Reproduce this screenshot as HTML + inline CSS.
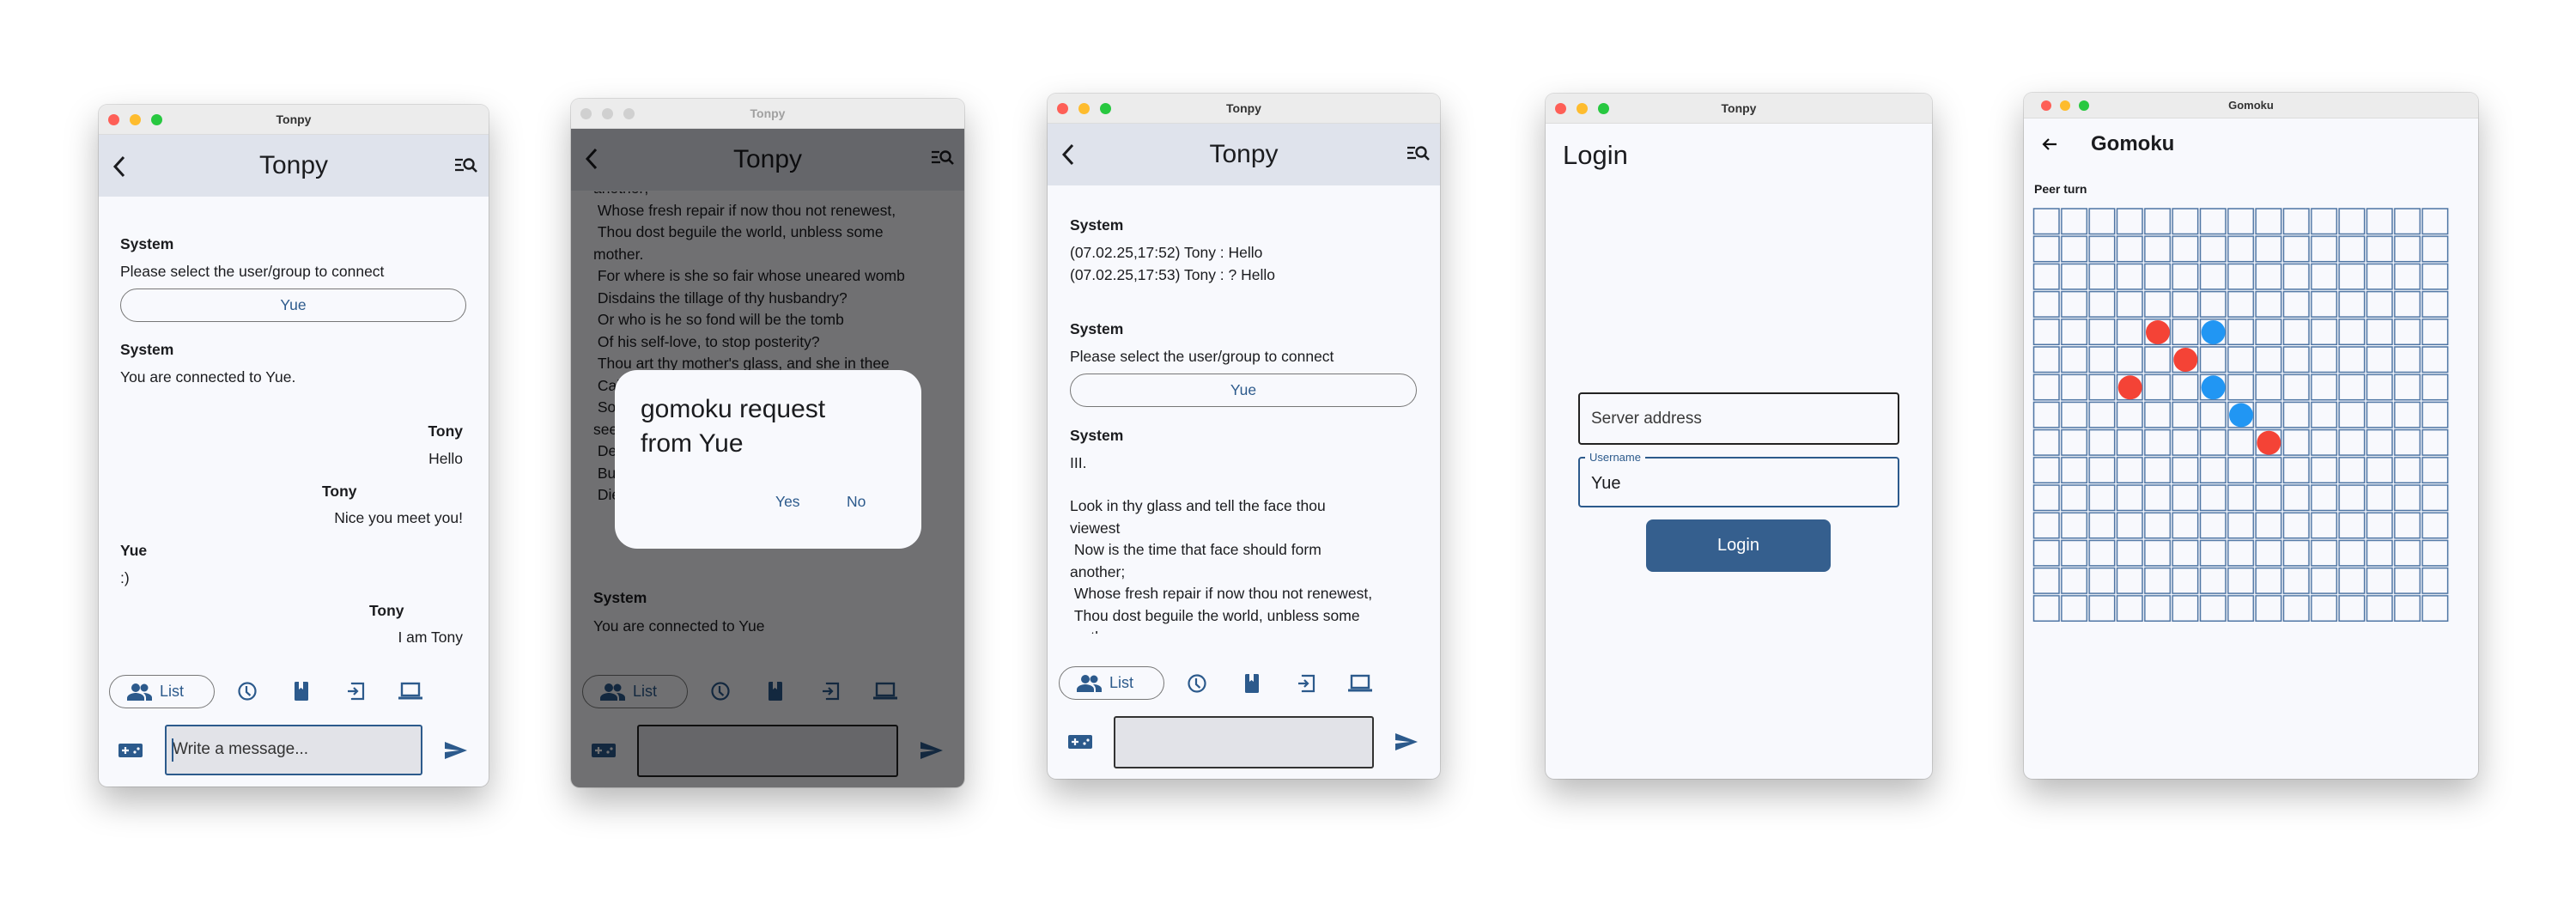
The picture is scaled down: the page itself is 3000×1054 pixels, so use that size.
<!DOCTYPE html>
<html><head><meta charset="utf-8">
<style>
*{margin:0;padding:0;box-sizing:border-box}
body{width:3000px;height:1054px;background:#fff;position:relative;overflow:hidden;font-family:"Liberation Sans",sans-serif;color:#1b1c1f}
.win{position:absolute;background:#f8f9fd;border-radius:10px;overflow:hidden;box-shadow:0 18px 40px rgba(0,0,0,.28),0 0 0 1px rgba(0,0,0,.12)}
.tb{position:absolute;left:0;top:0;right:0;height:35px;background:#ececec;border-bottom:1px solid #dcdcdc;text-align:center;font-weight:bold;font-size:14px;line-height:35px;color:#333}
.dot{position:absolute;width:13px;height:13px;border-radius:50%;top:11px}
.hd{position:absolute;left:0;right:0;top:35px;height:72px;background:#dfe3ec}
.hd .t{position:absolute;left:0;right:0;text-align:center;top:19px;font-size:30px;line-height:34px}
.a{position:absolute;font-size:17.5px;line-height:24px;white-space:nowrap}
.b{font-weight:bold}
.btn{position:absolute;border:1.5px solid #777;border-radius:20px;text-align:center;color:#2c5a8c;font-size:17.5px;line-height:36px}
.chip{position:absolute;border:1.5px solid #777;border-radius:20px;height:39px;width:123px;color:#2c5a8c;font-size:18px;line-height:36px}
.ic{position:absolute}
.inp{position:absolute;background:#e2e3e8;border-radius:3px}
</style></head><body>

<!-- Window 1 -->
<div class="win" style="left:115px;top:122px;width:454px;height:794px">
 <div class="tb">Tonpy<div class="dot" style="left:11px;background:#fe5f57"></div><div class="dot" style="left:36px;background:#febc2e"></div><div class="dot" style="left:61px;background:#28c840"></div></div>
 <div class="hd"><div class="t">Tonpy</div>
  <svg class="ic" style="left:12px;top:22px" width="26" height="30" viewBox="0 0 26 30"><path d="M17 4 L7 15 L17 26" fill="none" stroke="#1b1c1f" stroke-width="3"/></svg>
  <svg class="ic" style="left:413px;top:24px" width="28" height="24" viewBox="0 0 28 24"><path d="M2 5h9M2 11h7M2 17h10" stroke="#1b1c1f" stroke-width="2.2"/><circle cx="18" cy="10" r="5.5" fill="none" stroke="#1b1c1f" stroke-width="2.4"/><path d="M22 14l5 5" stroke="#1b1c1f" stroke-width="2.6"/></svg>
 </div>
 <div class="a b" style="left:25px;top:150px">System</div>
 <div class="a" style="left:25px;top:182px">Please select the user/group to connect</div>
 <div class="btn" style="left:25px;top:214px;width:403px;height:39px">Yue</div>
 <div class="a b" style="left:25px;top:273px">System</div>
 <div class="a" style="left:25px;top:305px">You are connected to Yue.</div>
 <div class="a b" style="right:30px;top:368px">Tony</div>
 <div class="a" style="right:30px;top:400px">Hello</div>
 <div class="a b" style="left:260px;top:438px">Tony</div>
 <div class="a" style="right:30px;top:469px">Nice you meet you!</div>
 <div class="a b" style="left:25px;top:507px">Yue</div>
 <div class="a" style="left:25px;top:539px">:)</div>
 <div class="a b" style="left:315px;top:577px">Tony</div>
 <div class="a" style="right:30px;top:608px">I am Tony</div>
 <div class="chip" style="left:12px;top:664px"><svg class="ic" style="left:20px;top:8px" width="30" height="22" viewBox="0 0 30 22"><circle cx="10" cy="6" r="5" fill="#2c5a8c"/><circle cx="20" cy="6" r="4.5" fill="#2c5a8c"/><path d="M0 21v-3c0-4 6-6 10-6s10 2 10 6v3z" fill="#2c5a8c"/><path d="M19 12c4 0 10 1.5 10 5.5v3.5h-7v-3c0-2.5-1-4.5-3-6z" fill="#2c5a8c"/></svg><span style="position:absolute;left:58px">List</span></div>
 <svg class="ic" style="left:161px;top:671px" width="24" height="24" viewBox="0 0 24 24"><circle cx="12" cy="12" r="9.5" fill="none" stroke="#2c5a8c" stroke-width="2.2"/><path d="M11 6v7l4.5 4" fill="none" stroke="#2c5a8c" stroke-width="2.2"/></svg>
 <svg class="ic" style="left:226px;top:671px" width="20" height="24" viewBox="0 0 20 24"><rect x="2" y="1" width="16" height="22" rx="1.5" fill="#2c5a8c"/><path d="M7 1v9l2.5-2 2.5 2V1" fill="#f8f9fd"/></svg>
 <svg class="ic" style="left:287px;top:671px" width="24" height="24" viewBox="0 0 24 24"><path d="M8 4V3h13v18H8v-1" fill="none" stroke="#2c5a8c" stroke-width="2.2"/><path d="M3 12h11M10 8l4 4-4 4" fill="none" stroke="#2c5a8c" stroke-width="2.2"/></svg>
 <svg class="ic" style="left:348px;top:671px" width="30" height="24" viewBox="0 0 30 24"><rect x="5" y="3" width="20" height="14" fill="none" stroke="#2c5a8c" stroke-width="2.4"/><path d="M1 20h28" stroke="#2c5a8c" stroke-width="3"/></svg>
 <svg class="ic" style="left:22px;top:741px" width="30" height="22" viewBox="0 0 30 22"><rect x="1" y="3" width="28" height="16" rx="2" fill="#2c5a8c"/><path d="M5 11h8M9 7v8" stroke="#f8f9fd" stroke-width="2.2"/><circle cx="20" cy="13" r="1.6" fill="#f8f9fd"/><circle cx="24" cy="9" r="1.6" fill="#f8f9fd"/></svg>
 <div class="inp" style="left:77px;top:722px;width:300px;height:59px;border:2px solid #2c5a8c"><div class="a" style="left:7px;top:15px;font-size:19px;color:#333">Write a message...</div><div style="position:absolute;left:6px;top:14px;width:2px;height:27px;background:#2c5a8c"></div></div>
 <svg class="ic" style="left:402px;top:740px" width="28" height="24" viewBox="0 0 28 24"><path d="M1 22L27 12 1 2v8l17 2-17 2z" fill="#2c5a8c"/></svg>
</div>

<!-- Window 2 -->
<div class="win" style="left:665px;top:115px;width:458px;height:802px">
 <div style="position:absolute;left:0;top:35px;right:0;bottom:0">
  <div class="hd" style="top:0"><div class="t">Tonpy</div>
   <svg class="ic" style="left:12px;top:20px" width="26" height="30" viewBox="0 0 26 30"><path d="M17 4 L7 15 L17 26" fill="none" stroke="#1b1c1f" stroke-width="3"/></svg>
   <svg class="ic" style="left:418px;top:22px" width="28" height="24" viewBox="0 0 28 24"><path d="M2 5h9M2 11h7M2 17h10" stroke="#1b1c1f" stroke-width="2.2"/><circle cx="18" cy="10" r="5.5" fill="none" stroke="#1b1c1f" stroke-width="2.4"/><path d="M22 14l5 5" stroke="#1b1c1f" stroke-width="2.6"/></svg>
  </div>
  <div style="position:absolute;left:0;right:0;top:73px;height:380px;overflow:hidden">
   <div class="a" style="left:26px;top:-16px">another;</div>
   <div class="a" style="left:26px;top:10px">&nbsp;Whose fresh repair if now thou not renewest,</div>
   <div class="a" style="left:26px;top:35px">&nbsp;Thou dost beguile the world, unbless some</div>
   <div class="a" style="left:26px;top:61px">mother.</div>
   <div class="a" style="left:26px;top:86px">&nbsp;For where is she so fair whose uneared womb</div>
   <div class="a" style="left:26px;top:112px">&nbsp;Disdains the tillage of thy husbandry?</div>
   <div class="a" style="left:26px;top:137px">&nbsp;Or who is he so fond will be the tomb</div>
   <div class="a" style="left:26px;top:163px">&nbsp;Of his self-love, to stop posterity?</div>
   <div class="a" style="left:26px;top:188px">&nbsp;Thou art thy mother's glass, and she in thee</div>
   <div class="a" style="left:26px;top:214px">&nbsp;Calls back the lovely April of her prime;</div>
   <div class="a" style="left:26px;top:239px">&nbsp;So thou through windows of thine age shalt</div>
   <div class="a" style="left:26px;top:265px">see</div>
   <div class="a" style="left:26px;top:290px">&nbsp;Despite of wrinkles this thy golden time.</div>
   <div class="a" style="left:26px;top:316px">&nbsp;But if thou live remember'd not to be,</div>
   <div class="a" style="left:26px;top:341px">&nbsp;Die single, and thine image dies with thee.</div>
  </div>
  <div class="a b" style="left:26px;top:534px">System</div>
  <div class="a" style="left:26px;top:567px">You are connected to Yue</div>
  <div class="chip" style="left:13px;top:636px"><svg class="ic" style="left:20px;top:8px" width="30" height="22" viewBox="0 0 30 22"><circle cx="10" cy="6" r="5" fill="#2c5a8c"/><circle cx="20" cy="6" r="4.5" fill="#2c5a8c"/><path d="M0 21v-3c0-4 6-6 10-6s10 2 10 6v3z" fill="#2c5a8c"/><path d="M19 12c4 0 10 1.5 10 5.5v3.5h-7v-3c0-2.5-1-4.5-3-6z" fill="#2c5a8c"/></svg><span style="position:absolute;left:58px">List</span></div>
  <svg class="ic" style="left:162px;top:643px" width="24" height="24" viewBox="0 0 24 24"><circle cx="12" cy="12" r="9.5" fill="none" stroke="#2c5a8c" stroke-width="2.2"/><path d="M11 6v7l4.5 4" fill="none" stroke="#2c5a8c" stroke-width="2.2"/></svg>
  <svg class="ic" style="left:228px;top:643px" width="20" height="24" viewBox="0 0 20 24"><rect x="2" y="1" width="16" height="22" rx="1.5" fill="#2c5a8c"/><path d="M7 1v9l2.5-2 2.5 2V1" fill="#f8f9fd"/></svg>
  <svg class="ic" style="left:290px;top:643px" width="24" height="24" viewBox="0 0 24 24"><path d="M8 4V3h13v18H8v-1" fill="none" stroke="#2c5a8c" stroke-width="2.2"/><path d="M3 12h11M10 8l4 4-4 4" fill="none" stroke="#2c5a8c" stroke-width="2.2"/></svg>
  <svg class="ic" style="left:351px;top:643px" width="30" height="24" viewBox="0 0 30 24"><rect x="5" y="3" width="20" height="14" fill="none" stroke="#2c5a8c" stroke-width="2.4"/><path d="M1 20h28" stroke="#2c5a8c" stroke-width="3"/></svg>
  <svg class="ic" style="left:23px;top:713px" width="30" height="22" viewBox="0 0 30 22"><rect x="1" y="3" width="28" height="16" rx="2" fill="#2c5a8c"/><path d="M5 11h8M9 7v8" stroke="#f8f9fd" stroke-width="2.2"/><circle cx="20" cy="13" r="1.6" fill="#f8f9fd"/><circle cx="24" cy="9" r="1.6" fill="#f8f9fd"/></svg>
  <div class="inp" style="left:77px;top:694px;width:304px;height:61px;border:2px solid #222"></div>
  <svg class="ic" style="left:406px;top:712px" width="28" height="24" viewBox="0 0 28 24"><path d="M1 22L27 12 1 2v8l17 2-17 2z" fill="#2c5a8c"/></svg>
  <div style="position:absolute;left:0;top:0;right:0;bottom:0;background:rgba(0,0,0,.55)"></div>
  <div style="position:absolute;left:51px;top:281px;width:357px;height:208px;background:#f8f9fd;border-radius:26px">
   <div style="position:absolute;left:30px;top:26px;font-size:30px;line-height:40px">gomoku request<br>from Yue</div>
   <div class="a" style="left:187px;top:141px;color:#2c5a8c">Yes</div>
   <div class="a" style="left:270px;top:141px;color:#2c5a8c">No</div>
  </div>
 </div>
 <div class="tb" style="color:#a0a0a0">Tonpy<div class="dot" style="left:11px;background:#d0d0d0"></div><div class="dot" style="left:36px;background:#d0d0d0"></div><div class="dot" style="left:61px;background:#d0d0d0"></div></div>
</div>

<!-- Window 3 -->
<div class="win" style="left:1220px;top:109px;width:457px;height:798px">
 <div class="tb">Tonpy<div class="dot" style="left:11px;background:#fe5f57"></div><div class="dot" style="left:36px;background:#febc2e"></div><div class="dot" style="left:61px;background:#28c840"></div></div>
 <div class="hd"><div class="t">Tonpy</div>
  <svg class="ic" style="left:12px;top:21px" width="26" height="30" viewBox="0 0 26 30"><path d="M17 4 L7 15 L17 26" fill="none" stroke="#1b1c1f" stroke-width="3"/></svg>
  <svg class="ic" style="left:417px;top:23px" width="28" height="24" viewBox="0 0 28 24"><path d="M2 5h9M2 11h7M2 17h10" stroke="#1b1c1f" stroke-width="2.2"/><circle cx="18" cy="10" r="5.5" fill="none" stroke="#1b1c1f" stroke-width="2.4"/><path d="M22 14l5 5" stroke="#1b1c1f" stroke-width="2.6"/></svg>
 </div>
 <div style="position:absolute;left:0;right:0;top:107px;height:522px;overflow:hidden">
  <div class="a b" style="left:26px;top:34px">System</div>
  <div class="a" style="left:26px;top:66px">(07.02.25,17:52) Tony : Hello</div>
  <div class="a" style="left:26px;top:92px">(07.02.25,17:53) Tony : ? Hello</div>
  <div class="a b" style="left:26px;top:155px">System</div>
  <div class="a" style="left:26px;top:187px">Please select the user/group to connect</div>
  <div class="btn" style="left:26px;top:219px;width:404px;height:39px">Yue</div>
  <div class="a b" style="left:26px;top:279px">System</div>
  <div class="a" style="left:26px;top:311px">III.</div>
  <div class="a" style="left:26px;top:361px">Look in thy glass and tell the face thou</div>
  <div class="a" style="left:26px;top:387px">viewest</div>
  <div class="a" style="left:26px;top:412px">&nbsp;Now is the time that face should form</div>
  <div class="a" style="left:26px;top:438px">another;</div>
  <div class="a" style="left:26px;top:463px">&nbsp;Whose fresh repair if now thou not renewest,</div>
  <div class="a" style="left:26px;top:489px">&nbsp;Thou dost beguile the world, unbless some</div>
  <div class="a" style="left:26px;top:514px">mother.</div>
 </div>
 <div class="chip" style="left:13px;top:667px"><svg class="ic" style="left:20px;top:8px" width="30" height="22" viewBox="0 0 30 22"><circle cx="10" cy="6" r="5" fill="#2c5a8c"/><circle cx="20" cy="6" r="4.5" fill="#2c5a8c"/><path d="M0 21v-3c0-4 6-6 10-6s10 2 10 6v3z" fill="#2c5a8c"/><path d="M19 12c4 0 10 1.5 10 5.5v3.5h-7v-3c0-2.5-1-4.5-3-6z" fill="#2c5a8c"/></svg><span style="position:absolute;left:58px">List</span></div>
 <svg class="ic" style="left:162px;top:675px" width="24" height="24" viewBox="0 0 24 24"><circle cx="12" cy="12" r="9.5" fill="none" stroke="#2c5a8c" stroke-width="2.2"/><path d="M11 6v7l4.5 4" fill="none" stroke="#2c5a8c" stroke-width="2.2"/></svg>
 <svg class="ic" style="left:228px;top:675px" width="20" height="24" viewBox="0 0 20 24"><rect x="2" y="1" width="16" height="22" rx="1.5" fill="#2c5a8c"/><path d="M7 1v9l2.5-2 2.5 2V1" fill="#f8f9fd"/></svg>
 <svg class="ic" style="left:289px;top:675px" width="24" height="24" viewBox="0 0 24 24"><path d="M8 4V3h13v18H8v-1" fill="none" stroke="#2c5a8c" stroke-width="2.2"/><path d="M3 12h11M10 8l4 4-4 4" fill="none" stroke="#2c5a8c" stroke-width="2.2"/></svg>
 <svg class="ic" style="left:349px;top:675px" width="30" height="24" viewBox="0 0 30 24"><rect x="5" y="3" width="20" height="14" fill="none" stroke="#2c5a8c" stroke-width="2.4"/><path d="M1 20h28" stroke="#2c5a8c" stroke-width="3"/></svg>
 <svg class="ic" style="left:23px;top:744px" width="30" height="22" viewBox="0 0 30 22"><rect x="1" y="3" width="28" height="16" rx="2" fill="#2c5a8c"/><path d="M5 11h8M9 7v8" stroke="#f8f9fd" stroke-width="2.2"/><circle cx="20" cy="13" r="1.6" fill="#f8f9fd"/><circle cx="24" cy="9" r="1.6" fill="#f8f9fd"/></svg>
 <div class="inp" style="left:77px;top:725px;width:303px;height:61px;border:2px solid #333"></div>
 <svg class="ic" style="left:404px;top:743px" width="28" height="24" viewBox="0 0 28 24"><path d="M1 22L27 12 1 2v8l17 2-17 2z" fill="#2c5a8c"/></svg>
</div>

<!-- Window 4 -->
<div class="win" style="left:1800px;top:109px;width:450px;height:798px">
 <div class="tb">Tonpy<div class="dot" style="left:11px;background:#fe5f57"></div><div class="dot" style="left:36px;background:#febc2e"></div><div class="dot" style="left:61px;background:#28c840"></div></div>
 <div style="position:absolute;left:20px;top:52px;font-size:31px;line-height:40px">Login</div>
 <div style="position:absolute;left:38px;top:348px;width:374px;height:61px;border:2px solid #222;border-radius:4px"><div class="a" style="left:13px;top:17px;font-size:19px;color:#3a3a3a">Server address</div></div>
 <div style="position:absolute;left:38px;top:423px;width:374px;height:59px;border:2px solid #2c5a8c;border-radius:4px"><div style="position:absolute;left:6px;top:-9px;padding:0 5px;background:#f8f9fd;font-size:13px;line-height:15px;color:#2c5a8c">Username</div><div class="a" style="left:13px;top:17px;font-size:20px">Yue</div></div>
 <div style="position:absolute;left:117px;top:496px;width:215px;height:61px;border-radius:8px;background:#355f8e;color:#fff;text-align:center;font-size:20px;line-height:61px">Login</div>
</div>

<!-- Window 5 -->
<div class="win" style="left:2357px;top:108px;width:529px;height:799px">
 <div class="tb" style="height:30px;line-height:30px;font-size:13px">Gomoku<div class="dot" style="left:20px;top:9px;width:12px;height:12px;background:#fe5f57"></div><div class="dot" style="left:42px;top:9px;width:12px;height:12px;background:#febc2e"></div><div class="dot" style="left:64px;top:9px;width:12px;height:12px;background:#28c840"></div></div>
 <svg class="ic" style="left:20px;top:50px" width="20" height="20" viewBox="0 0 20 20"><path d="M18 10H3M9 4L3 10l6 6" fill="none" stroke="#111" stroke-width="2.2"/></svg>
 <div class="a b" style="left:78px;top:45px;font-size:24px;line-height:30px">Gomoku</div>
 <div class="a b" style="left:12px;top:103px;font-size:14px;line-height:18px">Peer turn</div>
 <svg class="ic" style="left:0;top:0" width="529" height="799">
  <defs><pattern id="g" x="10.5" y="134" width="32.33" height="32.2" patternUnits="userSpaceOnUse"><rect x="1" y="1" width="29.5" height="29.5" fill="none" stroke="#4d74a3" stroke-width="1.5"/></pattern></defs>
  <rect x="10.5" y="134" width="485" height="483" fill="url(#g)"/>
  <circle cx="156" cy="279" r="14" fill="#f44336"/>
  <circle cx="220.6" cy="279" r="14" fill="#2196f3"/>
  <circle cx="188.3" cy="311" r="14" fill="#f44336"/>
  <circle cx="123.7" cy="343.3" r="14" fill="#f44336"/>
  <circle cx="220.6" cy="343.3" r="14" fill="#2196f3"/>
  <circle cx="253" cy="375.5" r="14" fill="#2196f3"/>
  <circle cx="285.3" cy="407.7" r="14" fill="#f44336"/>
 </svg>
</div>

</body></html>
